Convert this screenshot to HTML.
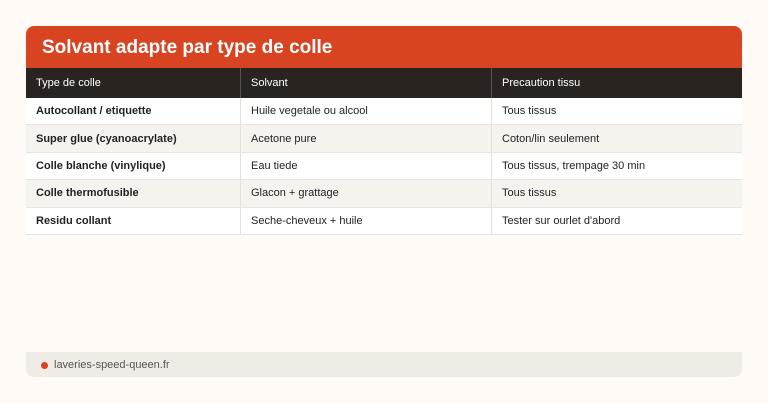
<!DOCTYPE html>
<html><head><style>
body{margin:0;background:#fffaf6;font-family:"Liberation Sans",sans-serif;width:768px;height:403px;position:relative}
.card{position:absolute;left:26px;top:26px;width:716px}
.hd{background:#d84421;color:#fff;font-weight:bold;font-size:19px;height:42px;line-height:44px;padding-left:16px;border-radius:8px 8px 0 0}
table{border-collapse:collapse;width:716px;font-size:11px;color:#222}
th{background:#2a2420;color:#fff;font-weight:normal;text-align:left;height:30px;padding:0 0 0 10px;border-right:1px solid #555}
th:last-child{border-right:none}
td{height:26.4px;padding:0 0 0 10px;border-right:1px solid #e4e0da;border-bottom:1px solid #e8e4de;background:#fff}
td:last-child{border-right:none}
tr:nth-child(odd) td{background:#f6f3ee}
td:first-child{font-weight:bold}
.ft{position:absolute;left:26px;top:352px;width:716px;height:25px;background:#efece6;border-radius:0 0 8px 8px;font-size:11px;color:#555;line-height:27px}
.dot{position:absolute;left:15px;top:10px;width:7px;height:7px;border-radius:50%;background:#d84421}
</style></head><body>
<div class="card">
<div class="hd">Solvant adapte par type de colle</div>
<table>
<tr><th style="width:204px">Type de colle</th><th style="width:240px">Solvant</th><th>Precaution tissu</th></tr>
<tr><td>Autocollant / etiquette</td><td>Huile vegetale ou alcool</td><td>Tous tissus</td></tr>
<tr><td>Super glue (cyanoacrylate)</td><td>Acetone pure</td><td>Coton/lin seulement</td></tr>
<tr><td>Colle blanche (vinylique)</td><td>Eau tiede</td><td>Tous tissus, trempage 30 min</td></tr>
<tr><td>Colle thermofusible</td><td>Glacon + grattage</td><td>Tous tissus</td></tr>
<tr><td>Residu collant</td><td>Seche-cheveux + huile</td><td>Tester sur ourlet d'abord</td></tr>
</table>
</div>
<div class="ft"><span class="dot"></span><span style="margin-left:28px">laveries-speed-queen.fr</span></div>
</body></html>
